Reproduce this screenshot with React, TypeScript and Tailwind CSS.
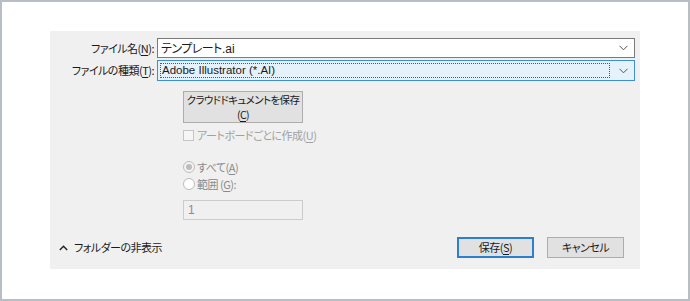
import React from "react";

const font = "font-['Noto_Sans_CJK_JP','Noto_Sans',sans-serif] [font-feature-settings:'palt']";
const latin = "font-['Liberation_Sans','Noto_Sans_CJK_JP',sans-serif] tracking-normal";

function Chevron({ className = "" }: { className?: string }) {
  return (
    <svg width="9" height="6" viewBox="0 0 9 6" className={className}>
      <path d="M0.5 0.8 L4.5 4.8 L8.5 0.8" fill="none" stroke="#555" strokeWidth="1" />
    </svg>
  );
}

function U({ children }: { children: React.ReactNode }) {
  return <span className="underline underline-offset-2">{children}</span>;
}

export default function App() {
  return (
    <div className={`w-[690px] h-[301px] border-2 border-[#b9bec4] bg-white pl-[48px] pt-[29px] ${font} text-[11px] tracking-[-0.5px] leading-none text-[#1a1a1a]`}>
      <div className="w-[590px] h-[238px] bg-[#f0f0f0] flex flex-col pt-[7px] pr-[5px]">
        {/* File name */}
        <div className="flex items-center h-[20px]">
          <div className="w-[107px] text-right pr-[3px] whitespace-nowrap">
            ファイル名(<U>N</U>):
          </div>
          <div className="flex-1 h-[20px] bg-white border border-[#7a7a7a] flex items-center pl-[3px] pr-[6px]">
            <span className="flex-1 text-[12px]">
              テンプレート<span className={`${latin} text-[12px]`}>.ai</span>
            </span>
            <Chevron />
          </div>
        </div>
        {/* File type */}
        <div className="flex items-center h-[21px] mt-[2px]">
          <div className="w-[107px] text-right pr-[3px] whitespace-nowrap">
            ファイルの種類(<U>T</U>):
          </div>
          <div className="flex-1 h-[21px] bg-[#e5f1fb] border border-[#3c8fd6] flex items-center p-[2px] pr-[6px]">
            <div className={`flex-1 h-full border border-dotted border-[#555] flex items-center pl-[1px] text-[11.5px] ${latin}`}>
              Adobe Illustrator (*.AI)
            </div>
            <Chevron className="ml-[9px]" />
          </div>
        </div>

        {/* Options */}
        <div className="ml-[133px] mt-[10px] flex flex-col">
          <button className="w-[120px] h-[32px] bg-[#e1e1e1] border border-[#adadad] flex flex-col items-center justify-center text-[10.5px] leading-[15px] tracking-[-0.6px] text-[#1a1a1a] whitespace-nowrap">
            <span>クラウドドキュメントを保存</span>
            <span>
              (<U>C</U>)
            </span>
          </button>
          <div className="flex items-center mt-[7px] text-[#a0a0a0] whitespace-nowrap">
            <span className="w-[11px] h-[11px] border border-[#c5c5c5] bg-[#f6f6f6] mr-[3px]" />
            アートボードごとに作成(<U>U</U>)
          </div>

          <div className="flex items-center mt-[20px] text-[#8a8a8a]">
            <span className="w-[12px] h-[12px] rounded-full border border-[#bcbcbc] bg-[#f4f4f4] flex items-center justify-center mr-[2px]">
              <span className="w-[6px] h-[6px] rounded-full bg-[#bcbcbc]" />
            </span>
            すべて(<U>A</U>)
          </div>
          <div className="flex items-center mt-[5px] text-[#8a8a8a]">
            <span className="w-[12px] h-[12px] rounded-full border border-[#bcbcbc] bg-white mr-[2px]" />
            範囲 (<U>G</U>):
          </div>
          <div className={`w-[120px] h-[20px] mt-[10px] border border-[#cccccc] bg-[#f0f0f0] flex items-center pl-[4px] text-[#8a8a8a] text-[12px] ${latin}`}>
            1
          </div>
        </div>

        {/* Bottom bar */}
        <div className="mt-auto mb-[11px] flex items-center pl-[9px] pr-[11px]">
          <svg width="9" height="6" viewBox="0 0 9 6" className="mr-[6px]">
            <path d="M0.8 5 L4.5 1.3 L8.2 5" fill="none" stroke="#222" strokeWidth="1.4" />
          </svg>
          <span className="flex-1">フォルダーの非表示</span>
          <button className="w-[77px] h-[21px] bg-[#e1e1e1] border-2 border-[#2a7fd4] flex items-center justify-center">
            保存(<U>S</U>)
          </button>
          <button className="w-[77px] h-[21px] ml-[13px] bg-[#e1e1e1] border border-[#adadad] flex items-center justify-center">
            キャンセル
          </button>
        </div>
      </div>
    </div>
  );
}
